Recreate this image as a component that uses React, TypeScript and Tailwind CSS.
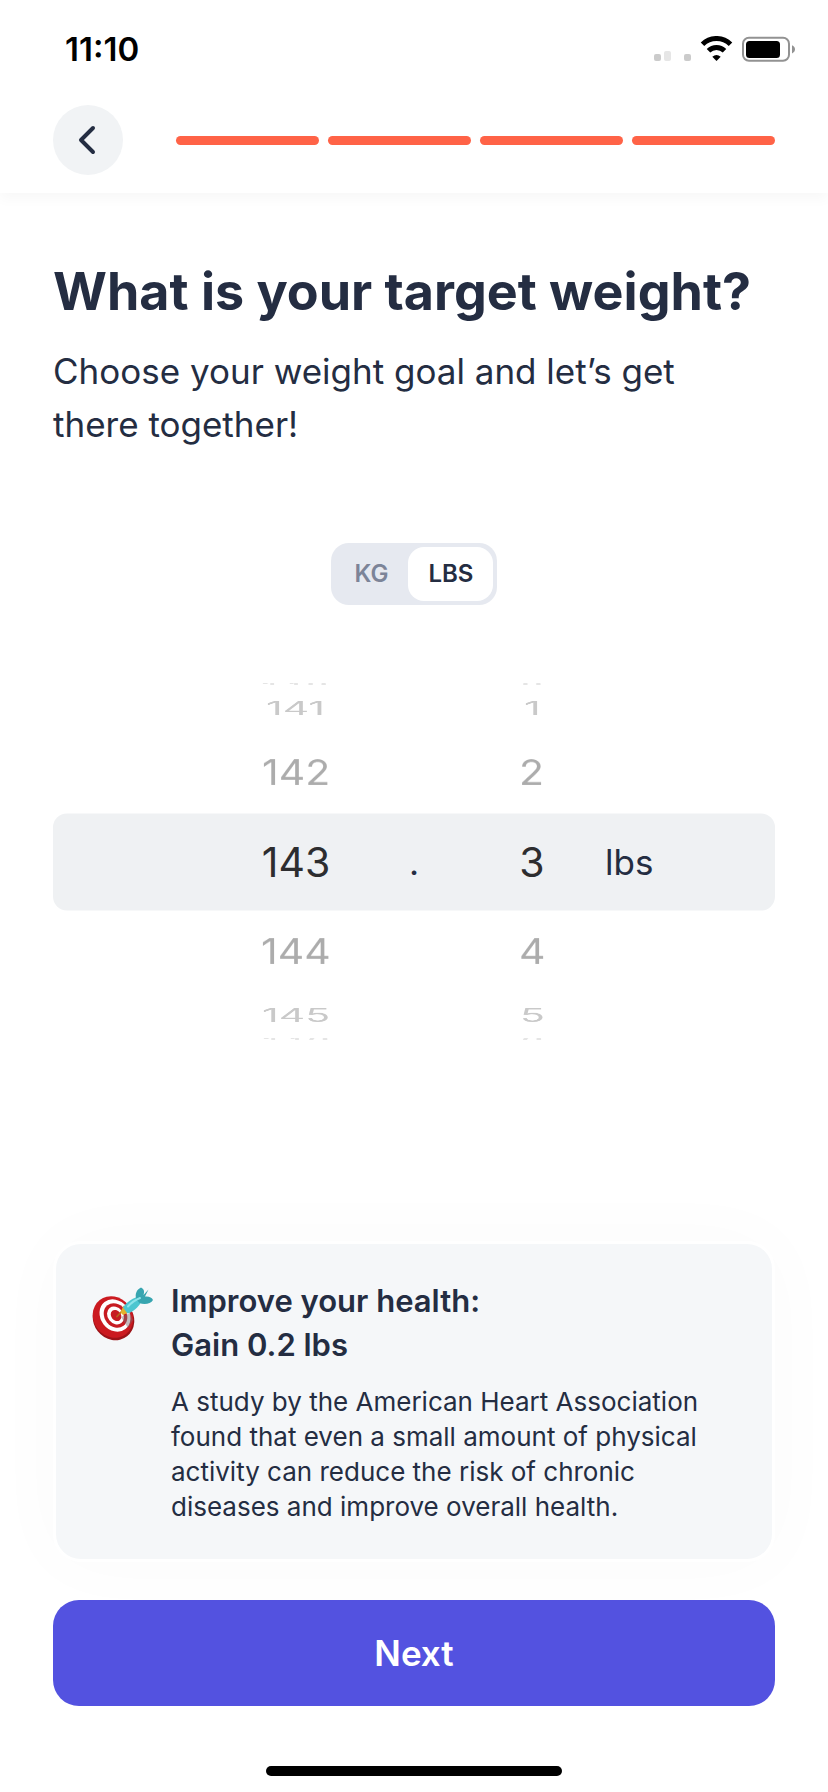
import React, { useState } from 'react';

type Unit = 'kg' | 'lbs';

const STEPS = [1, 2, 3, 4];

// Rows of the wheel, from the one above the fold to the one below it
const WHEEL_ROWS = [
  { offset: -3, row: 'h-[2px] text-neutral-200', face: 'rotate-x-87' },
  { offset: -2, row: 'h-[46px] text-[#c9c9c9]', face: 'rotate-x-62' },
  { offset: -1, row: 'h-[82px] text-[#acacac]', face: 'rotate-x-31' },
  { offset: 0, row: 'h-[97px] text-[#2d2d2f]', face: '' },
  { offset: 1, row: 'h-[82px] text-[#acacac]', face: 'rotate-x-31' },
  { offset: 2, row: 'h-[46px] text-[#c9c9c9]', face: 'rotate-x-62' },
  { offset: 3, row: 'h-[2px] text-neutral-200', face: 'rotate-x-87' },
];

const StatusBar: React.FC = () => (
  <div className="flex h-[98px] items-center justify-between pl-[65px] pr-[33px]">
    <span className="text-[33px] font-semibold leading-[40px] text-black">11:10</span>
    <svg className="h-[26px] w-[142px]" viewBox="0 0 142 26" fill="none" aria-hidden="true">
      <rect x="1" y="18" width="7" height="7" rx="2" fill="#cbcbcb" />
      <rect x="11" y="15" width="7" height="10" rx="2" fill="#e6e6e6" />
      <rect x="31" y="18" width="7" height="7" rx="2" fill="#cbcbcb" />
      <path d="M49.500 8.200A20 20 0 0 1 77.500 8.200" stroke="#000" strokeWidth="5" />
      <path d="M55.500 14.800A11.500 11.500 0 0 1 71.500 14.800" stroke="#000" strokeWidth="5" />
      <path d="M63.500 25L59.300 20.700A6.500 6.500 0 0 1 67.700 20.700Z" fill="#000" />
      <rect x="90" y="1.800" width="46" height="23" rx="6" stroke="#929292" strokeWidth="2" />
      <rect x="93" y="5" width="34" height="17" rx="3.500" fill="#000" />
      <path d="M139 9.200C141 10 142 11.600 142 13.300C142 15 141 16.600 139 17.400Z" fill="#929292" />
    </svg>
  </div>
);

const TargetIcon: React.FC = () => (
  <svg className="h-[54px] w-[62px] shrink-0" viewBox="0 0 62 54" aria-hidden="true">
    <ellipse cx="22.500" cy="32" rx="20" ry="22" transform="rotate(-38 22.500 32)" fill="#9c1318" />
    <ellipse cx="22" cy="30" rx="19.500" ry="21.500" transform="rotate(-38 22 30)" fill="#cb1a20" />
    <ellipse cx="24" cy="28.500" rx="14.500" ry="17" transform="rotate(-38 24 28.500)" fill="#fff" />
    <ellipse cx="24.500" cy="28.500" rx="11" ry="13" transform="rotate(-38 24.500 28.500)" fill="#c71c22" />
    <ellipse cx="24.500" cy="28.500" rx="7.800" ry="9.500" transform="rotate(-38 24.500 28.500)" fill="#fff" />
    <ellipse cx="25" cy="28.500" rx="4.800" ry="6" transform="rotate(-38 25 28.500)" fill="#c71c22" />
    <path d="M30 30L39 26L42 33L37 41Z" fill="#7b6a70" opacity="0.450" />
    <path d="M26 29.500L33 22" stroke="#b5651d" strokeWidth="1.800" strokeLinecap="round" />
    <path d="M29.500 25.500L32.500 18.500L38.500 25L32 28Z" fill="#e2b32c" />
    <path d="M32 20.500C34 16.500 41 11.500 47 9.500L50.500 14.500C48 20 41 25.500 36.500 26.500Z" fill="#4cc6d0" />
    <path d="M45.500 12.500C43.500 7.500 45.500 2.500 50 0.500C53.500 2 53.500 5 52.500 8L57.500 2.500L54 9.500C58 9 61 10.500 62 13C60 17 53 18 48.500 16Z" fill="#37a5b0" />
    <path d="M37 19.500C40 16 44 13 49 11" stroke="#8ce4ea" strokeWidth="2" strokeLinecap="round" fill="none" />
  </svg>
);

interface WheelProps {
  label: string;
  value: number;
  onChange: (value: number) => void;
}

const Wheel: React.FC<WheelProps> = ({ label, value, onChange }) => (
  <div role="group" aria-label={label} className="flex flex-col">
    {WHEEL_ROWS.map(({ offset, row, face }) => (
      <button
        key={offset}
        type="button"
        onClick={() => onChange(value + offset)}
        className={`flex items-center justify-center text-[41px] leading-[46px] ${row}`}
      >
        <span className={face}>{value + offset}</span>
      </button>
    ))}
  </div>
);

export default function App() {
  const [unit, setUnit] = useState<Unit>('lbs');
  const [whole, setWhole] = useState(143);
  const [tenths, setTenths] = useState(3);

  return (
    <div className="flex min-h-screen flex-col bg-white font-['Inter',sans-serif] text-[#242d42]">
      <header className="shadow-[0_6px_12px_rgba(0,0,0,0.03)]">
        <StatusBar />
        <div className="flex items-center gap-[53px] px-[53px] pb-[18px] pt-[7px]">
          <button
            type="button"
            aria-label="Back"
            className="flex size-[70px] items-center justify-center rounded-full bg-[#f1f3f5]"
          >
            <svg className="h-[30px] w-[20px]" viewBox="0 0 20 30" fill="none" aria-hidden="true">
              <path d="M15 3L3 15L15 27" stroke="#242d42" strokeWidth="4" strokeLinecap="round" strokeLinejoin="round" />
            </svg>
          </button>
          <div className="flex flex-1 gap-[9px]">
            {STEPS.map(step => (
              <div key={step} className="h-[9px] flex-1 rounded-full bg-[#ff6347]" />
            ))}
          </div>
        </div>
      </header>

      <main className="flex flex-1 flex-col px-[53px] pt-[67px]">
        <h1 className="text-[52px] font-bold leading-[64px]">What is your target weight?</h1>
        <p className="mt-[21px] max-w-[680px] text-[35px] leading-[53px]">
          Choose your weight goal and let’s get there together!
        </p>

        <fieldset
          aria-label="Unit"
          className="mx-auto mt-[92px] flex rounded-[18px] bg-[#e6e9f0] p-[4px] text-[24px] font-semibold leading-[54px]"
        >
          {(['kg', 'lbs'] as Unit[]).map(option => (
            <label
              key={option}
              className="relative cursor-pointer rounded-[16px] px-[20px] uppercase text-[#7c8498] has-checked:bg-white has-checked:text-[#242d42]"
            >
              <input
                type="radio"
                name="unit"
                className="absolute inset-0 cursor-pointer appearance-none"
                checked={unit === option}
                onChange={() => setUnit(option)}
              />
              {option}
            </label>
          ))}
        </fieldset>

        <div className="relative mt-[78px]">
          <div className="absolute inset-x-0 top-1/2 h-[97px] -translate-y-1/2 rounded-[14px] bg-[#eff1f3]" />
          <div className="relative grid grid-cols-[1fr_118px_118px_118px_1fr] items-center text-[35px] leading-[46px]">
            <div />
            <Wheel label="Whole" value={whole} onChange={setWhole} />
            <span className="text-center">.</span>
            <Wheel label="Tenths" value={tenths} onChange={setTenths} />
            <span className="pl-[14px]">{unit}</span>
          </div>
        </div>

        <section className="mt-auto flex gap-[18px] rounded-[28px] border-[3px] border-white bg-[#f5f7f9] px-[35px] pb-[35px] pt-[35px] shadow-[0_0_80px_rgba(0,0,0,0.025)]">
          <div className="pt-[8px]">
            <TargetIcon />
          </div>
          <div>
            <h2 className="text-[31px] font-semibold leading-[44px]">
              Improve your health:
              <br />
              Gain 0.2 lbs
            </h2>
            <p className="mt-[17px] text-[26px] leading-[35px]">
              A study by the American Heart Association found that even a small amount of physical activity can
              reduce the risk of chronic diseases and improve overall health.
            </p>
          </div>
        </section>
      </main>

      <footer className="flex flex-col items-center px-[53px] pb-[16px] pt-[38px]">
        <button
          type="button"
          className="w-full rounded-[26px] bg-[#5352e0] py-[30px] text-[35px] font-semibold leading-[46px] text-white"
        >
          Next
        </button>
        <div className="mt-[60px] h-[10px] w-[296px] rounded-full bg-black" />
      </footer>
    </div>
  );
}
